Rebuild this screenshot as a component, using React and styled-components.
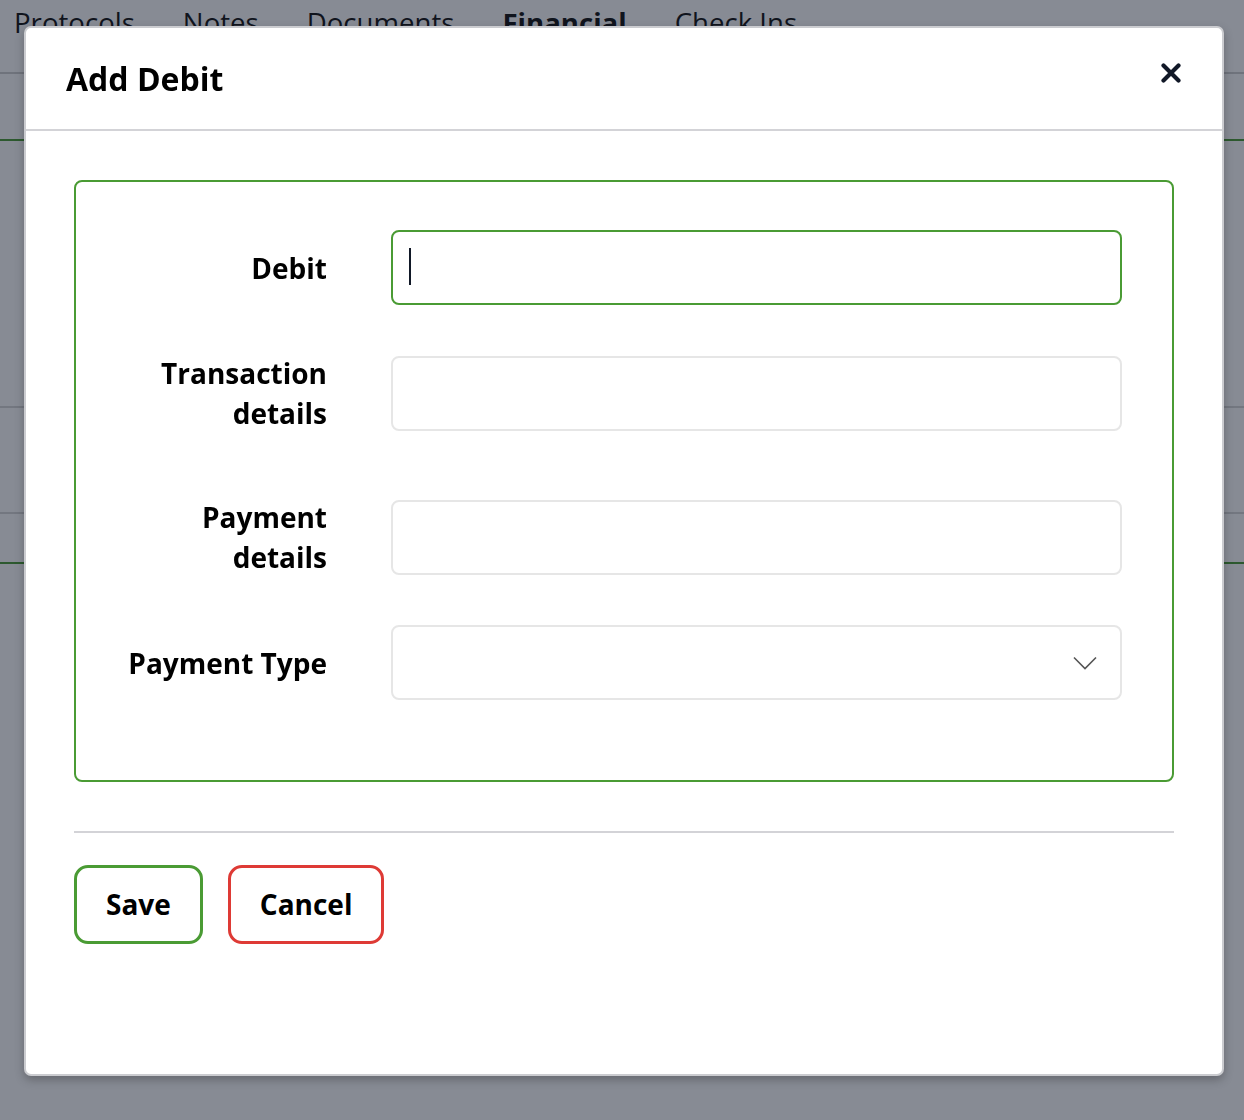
import React from "react";
import styled, { createGlobalStyle } from "styled-components";

const GlobalStyle = createGlobalStyle`
  html, body { margin: 0; padding: 0; background: #ffffff; }
  body { font-family: "Open Sans", "Noto Sans", Arial, sans-serif; color: #000; }
  * { box-sizing: border-box; }
`;

const GREEN = "#4a9b34";
const RED = "#de3a35";

/* ---------- background page ---------- */
const Page = styled.div`
  width: 1244px;
  height: 1120px;
  overflow: hidden;
`;

const TabBar = styled.nav`
  display: flex;
  gap: 48px;
  height: 74px;
  padding: 1px 0 0 14px;
  border-bottom: 2px solid #cfcfcf;
`;

const Tab = styled.span`
  font-size: 27.6px;
  line-height: 42px;
  font-weight: ${(p) => (p.$active ? 700 : 400)};
  color: #111;
`;

const Panel = styled.section`
  margin-top: 65px;
  border-top: 2px solid ${GREEN};
  border-bottom: 2px solid ${GREEN};
`;

const PanelRow = styled.div`
  height: ${(p) => p.$h}px;
  border-bottom: ${(p) => (p.$line ? "2px solid #d6d6d6" : "none")};
`;

/* ---------- modal ---------- */
const Overlay = styled.div`
  position: fixed;
  inset: 0;
  background: rgba(15, 23, 42, 0.5);
  padding: 26px 0 0 24px;
`;

const Modal = styled.div`
  width: 1200px;
  height: 1050px;
  background: #fff;
  border: 2px solid #cbccd0;
  border-radius: 7px;
  box-shadow: 0 4px 10px rgba(0, 0, 0, 0.25);
  display: flex;
  flex-direction: column;
`;

const Header = styled.header`
  height: 103px;
  display: flex;
  align-items: center;
  justify-content: space-between;
  padding: 0 41px 0 40px;
  border-bottom: 2px solid #d3d3d7;
`;

const Title = styled.h2`
  margin: 0;
  font-size: 32px;
  line-height: 44px;
  font-weight: 700;
  color: #000;
`;

const CloseButton = styled.button`
  border: none;
  background: none;
  padding: 0;
  margin-bottom: 12px;
  width: 20px;
  height: 20px;
  display: flex;
  cursor: pointer;
`;

const Body = styled.div`
  padding: 49px 48px 0 48px;
`;

const Fieldset = styled.div`
  border: 2px solid ${GREEN};
  border-radius: 8px;
  padding: 48px 50px 80px 50px;
  display: flex;
  flex-direction: column;
`;

const Row = styled.div`
  display: grid;
  grid-template-columns: 201px 1fr;
  column-gap: 64px;
  align-items: center;
  margin-top: ${(p) => p.$top || 0}px;
`;

const Label = styled.label`
  text-align: right;
  font-size: 28px;
  line-height: 40px;
  font-weight: 700;
  color: #000;
`;

const InputWrap = styled.div`
  position: relative;
  height: 75px;
`;

const TextInput = styled.input`
  width: 100%;
  height: 75px;
  border: 2px solid ${(p) => (p.$focused ? GREEN : "#e6e6e6")};
  border-radius: 8px;
  padding: 0 16px;
  font-family: inherit;
  font-size: 24px;
  outline: none;
  background: #fff;
`;

const Caret = styled.span`
  position: absolute;
  left: 18px;
  top: 18px;
  width: 2px;
  height: 37px;
  background: #111827;
`;

const SelectBox = styled.div`
  height: 75px;
  border: 2px solid #e6e6e6;
  border-radius: 8px;
  display: flex;
  align-items: center;
  justify-content: flex-end;
  padding-right: 23px;
`;

const Divider = styled.hr`
  margin: 49px 0 0 0;
  border: none;
  border-top: 2px solid #d3d3d7;
`;

const Actions = styled.div`
  display: flex;
  gap: 25px;
  margin-top: 32px;
`;

const ActionButton = styled.button`
  font-family: inherit;
  font-size: 28px;
  line-height: 40px;
  font-weight: 700;
  color: #000;
  background: #fff;
  border: 3px solid ${(p) => p.$color};
  border-radius: 14px;
  padding: 16px 29px 17px;
  cursor: pointer;
`;

export default function App() {
  return (
    <>
      <GlobalStyle />
      <Page>
        <TabBar>
          <Tab>Protocols</Tab>
          <Tab>Notes</Tab>
          <Tab>Documents</Tab>
          <Tab $active>Financial</Tab>
          <Tab>Check Ins</Tab>
        </TabBar>
        <Panel>
          <PanelRow $h={267} $line />
          <PanelRow $h={106} $line />
          <PanelRow $h={48} />
        </Panel>
      </Page>
      <Overlay>
        <Modal>
          <Header>
            <Title>Add Debit</Title>
            <CloseButton aria-label="Close">
              <svg width="20" height="20" viewBox="0 0 20 20">
                <path
                  d="M2.5 2.5 L17.5 17.5 M17.5 2.5 L2.5 17.5"
                  stroke="#111827"
                  strokeWidth="4.2"
                  strokeLinecap="round"
                />
              </svg>
            </CloseButton>
          </Header>
          <Body>
            <Fieldset>
              <Row>
                <Label>Debit</Label>
                <InputWrap>
                  <TextInput $focused />
                  <Caret />
                </InputWrap>
              </Row>
              <Row $top={48}>
                <Label>Transaction details</Label>
                <TextInput />
              </Row>
              <Row $top={64}>
                <Label>Payment details</Label>
                <TextInput />
              </Row>
              <Row $top={48}>
                <Label>Payment Type</Label>
                <SelectBox>
                  <svg width="24" height="14" viewBox="0 0 24 14">
                    <path
                      d="M1 1.5 L12 12.5 L23 1.5"
                      fill="none"
                      stroke="#555"
                      strokeWidth="1.6"
                    />
                  </svg>
                </SelectBox>
              </Row>
            </Fieldset>
            <Divider />
            <Actions>
              <ActionButton $color={GREEN}>Save</ActionButton>
              <ActionButton $color={RED}>Cancel</ActionButton>
            </Actions>
          </Body>
        </Modal>
      </Overlay>
    </>
  );
}
